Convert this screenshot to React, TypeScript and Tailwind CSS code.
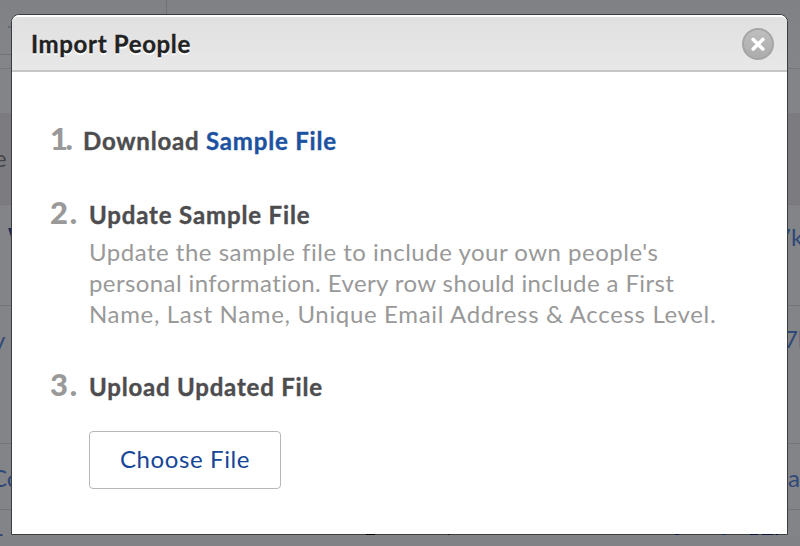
import React from "react";

type Row = {
  height: string;
  left: string;
  leftStyle: string;
  right: string;
  rightStyle: string;
};

const rows: Row[] = [
  { height: "h-[101px]", left: "W", leftStyle: "ml-[8px] mt-[16px] font-bold text-[#13285a]", right: "7k", rightStyle: "ml-[777px] mt-[16px]" },
  { height: "h-[138px]", left: "y", leftStyle: "-ml-[7px] mt-[18px]", right: "7k", rightStyle: "ml-[784px] mt-[17px]" },
  { height: "h-[66px]", left: "Co", leftStyle: "-ml-[9px] mt-[18px]", right: "a", rightStyle: "ml-[788px] mt-[18px]" },
];

function Backdrop() {
  return (
    <div className="flex h-[546px] w-[800px] flex-col overflow-hidden bg-[#838488] text-[24px] leading-[32px] text-[#2f4877]">
      <div className="flex h-[69px] shrink-0 border-b border-[#76777b] bg-gradient-to-b from-[#808185] to-[#848589]">
        <div className="flex h-[55px] w-[167px] items-center border-r border-b border-[#717277]">
          <div className="mb-[1px] ml-[8px] h-[2px] w-[5px] bg-[#696c7c]" />
        </div>
      </div>
      <div className="h-[44px] shrink-0" />
      <div className="h-[92px] shrink-0 border-b border-[#77777b] bg-[#7c7c80] text-[#45454a]">
        <div className="-ml-[6px] mt-[29px]">e</div>
      </div>
      {rows.map((row, i) => (
        <div key={i} className={`grid shrink-0 border-b border-[#747579] ${row.height}`}>
          <span className={`col-start-1 row-start-1 ${row.leftStyle}`}>{row.left}</span>
          <span className={`col-start-1 row-start-1 ${row.rightStyle}`}>{row.right}</span>
        </div>
      ))}
      <div className="flex h-[26px] shrink-0 items-end">
        <div className="h-[2px] w-[3px] rounded-tr bg-[#2f4877]" />
      </div>
      <div className="h-[10px] shrink-0 bg-[#818286]" />
    </div>
  );
}

function CloseButton() {
  return (
    <button aria-label="Close" className="flex size-[32px] items-center justify-center rounded-full border-2 border-[#a5a5a5] bg-gradient-to-b from-[#bebebe] to-[#acacac]">
      <svg width="16" height="16" viewBox="0 0 16 16" stroke="#fff" strokeWidth="3.6" strokeLinecap="round">
        <path d="M3.2 3.5L12.8 13.1M12.8 3.5L3.2 13.1" />
      </svg>
    </button>
  );
}

function Marks() {
  return (
    <div className="absolute top-[534px] left-0 flex h-[1px] w-[800px]">
      <i className="ml-[366px] w-[9px] bg-black" />
      <i className="ml-[73px] w-[2px] bg-[#151719]" />
      <i className="ml-[225px] w-[4px] bg-[#0b1740]" />
      <i className="ml-[43px] w-[4px] bg-[#162d4a]" />
      <i className="ml-[24px] w-[8px] bg-[#07133d]" />
      <i className="ml-[4px] w-[11px] bg-[#07133d]" />
      <i className="ml-[3px] w-[2px] bg-[#07133d]" />
    </div>
  );
}

export default function App() {
  return (
    <div className="relative h-[546px] w-[800px] overflow-hidden font-['Lato',sans-serif]">
      <Backdrop />
      <section className="absolute top-[14px] left-[11px] flex h-[521px] w-[777px] flex-col overflow-hidden rounded-t-[8px] border border-[#3c3d3f] bg-white">
        <header className="flex h-[57px] shrink-0 items-center justify-between rounded-t-[7px] border-t-2 border-b-2 border-t-white border-b-[#c6c6c6] bg-gradient-to-b from-[#e0e0e0] to-[#e8e8e8] pr-[13px] pl-[19px]">
          <h1 className="text-[24px] leading-[30px] font-bold tracking-[0.65px] text-[#222] [-webkit-text-stroke:0.3px] [text-shadow:0_2px_0_#fff]">Import People</h1>
          <CloseButton />
        </header>
        <div className="flex flex-col pl-[38px] whitespace-nowrap">
          <div className="mt-[46px] flex h-[40px] items-baseline font-bold text-[#4d4d4f]">
            <span className="w-[33px] text-[31px] leading-[40px] font-black tracking-[-2.5px] text-[#999]">1.</span>
            <h2 className="text-[24px] leading-[32px] tracking-[0.8px] [-webkit-text-stroke:0.4px]">Download <a className="text-[#1d52a1]">Sample File</a></h2>
          </div>
          <div className="mt-[34px] flex h-[40px] items-baseline font-bold text-[#4d4d4f]">
            <span className="w-[39px] text-[31px] leading-[40px] font-black tracking-[1.8px] text-[#999]">2.</span>
            <h2 className="text-[24px] leading-[32px] tracking-[0.85px] [-webkit-text-stroke:0.4px]">Update Sample File</h2>
          </div>
          <div className="mt-[4px] ml-[39px] flex flex-col text-[24px] leading-[31px] text-[#999]">
            <span className="tracking-[0.5px]">Update the sample file to include your own people's</span>
            <span className="tracking-[0.4px]">personal information. Every row should include a First</span>
            <span className="tracking-[0.66px]">Name, Last Name, Unique Email Address &amp; Access Level.</span>
          </div>
          <div className="mt-[35px] flex h-[40px] items-baseline font-bold text-[#4d4d4f]">
            <span className="w-[39px] text-[31px] leading-[40px] font-black tracking-[1.8px] text-[#999]">3.</span>
            <h2 className="text-[24px] leading-[32px] tracking-[0.8px] [-webkit-text-stroke:0.4px]">Upload Updated File</h2>
          </div>
          <button className="mt-[27px] ml-[39px] flex h-[58px] w-[192px] items-center justify-center rounded-[4px] border border-[#b7b7b7] pb-[2px] text-[24px] tracking-[0.6px] text-[#164697]">Choose File</button>
        </div>
      </section>
      <Marks />
    </div>
  );
}
